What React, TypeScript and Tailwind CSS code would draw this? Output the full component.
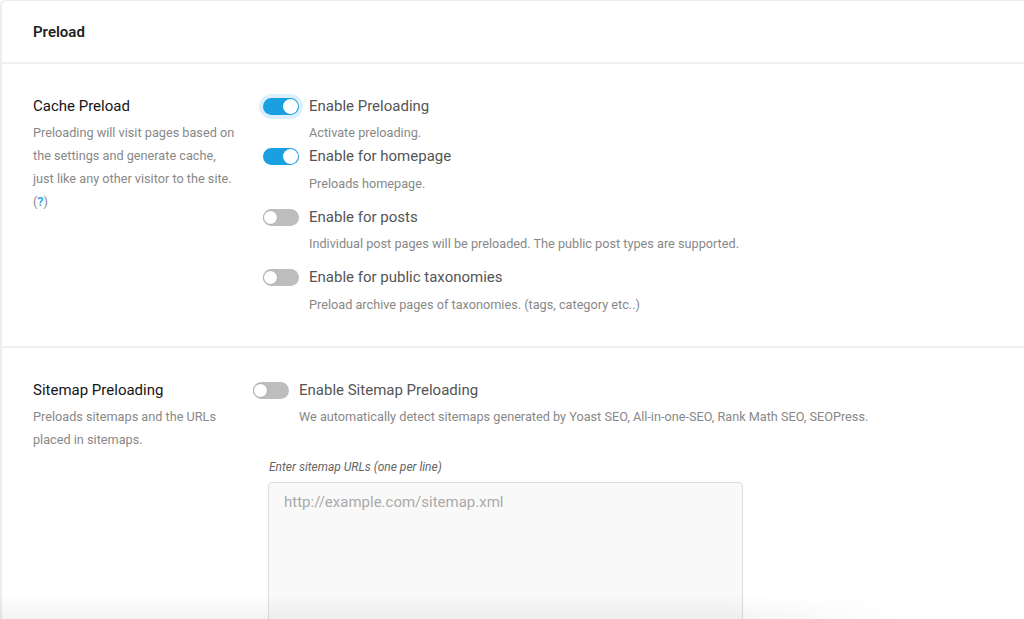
import React from "react";

function Toggle({ on, focus }: { on?: boolean; focus?: boolean }) {
  return (
    <span
      className={
        "relative inline-flex h-[17px] w-[36px] shrink-0 items-center rounded-full " +
        (on ? "bg-[#1a9fe0]" : "bg-[#bdbdbd]") +
        (focus ? " ring-4 ring-[#dcf0fb]" : "")
      }
    >
      <span
        className={
          "absolute top-[1px] h-[15px] w-[15px] rounded-full bg-white " +
          (on ? "right-[1px]" : "left-0 border border-[#aaaaaa]")
        }
      />
    </span>
  );
}

function Item({
  on,
  focus,
  label,
  desc,
  descMt,
  mt,
}: {
  on?: boolean;
  focus?: boolean;
  label: string;
  desc: string;
  descMt: string;
  mt: string;
}) {
  return (
    <div className={mt}>
      <div className="flex h-[20px] items-center">
        <Toggle on={on} focus={focus} />
        <span className="ml-[10px] text-[15px] leading-[20px] text-[#555555]">{label}</span>
      </div>
      <div className={"ml-[46px] text-[12.7px] leading-[20px] text-[#888888] " + descMt}>{desc}</div>
    </div>
  );
}

export default function App() {
  return (
    <div
      className="relative h-[619px] w-[1024px] overflow-hidden bg-white"
      style={{ fontFamily: "Roboto, 'Liberation Sans', sans-serif" }}
    >
      <div className="h-full rounded-tl-[6px] border-l-2 border-t border-[#ededed] bg-white">
        <div className="flex h-[61px] items-center px-[31px] pt-[1px]">
          <h2 className="text-[15px] font-semibold text-[#222222]">Preload</h2>
        </div>
        <div className="h-[2px] bg-[#efefef]" />

        <div className="flex px-[31px] pb-[31px] pt-[32px]">
          <div className="w-[230px] shrink-0">
            <div className="text-[15px] font-normal leading-[20px] text-[#151515]">Cache Preload</div>
            <p className="mt-[5px] w-[206px] text-[12.7px] leading-[23px] text-[#888888]">
              Preloading will visit pages based on the settings and generate cache, just like any other visitor to
              the site.{" "}
              <span>
                (<span className="font-medium text-[#1a9fe0]">?</span>)
              </span>
            </p>
          </div>
          <div>
            <Item on focus label="Enable Preloading" desc="Activate preloading." descMt="mt-[7px]" mt="" />
            <Item on label="Enable for homepage" desc="Preloads homepage." descMt="mt-[8px]" mt="mt-[3px]" />
            <Item
              label="Enable for posts"
              desc="Individual post pages will be preloaded. The public post types are supported."
              descMt="mt-[7px]"
              mt="mt-[13px]"
            />
            <Item
              label="Enable for public taxonomies"
              desc="Preload archive pages of taxonomies. (tags, category etc..)"
              descMt="mt-[8px]"
              mt="mt-[13px]"
            />
          </div>
        </div>
        <div className="h-[2px] bg-[#efefef]" />

        <div className="flex px-[31px] pt-[32px]">
          <div className="w-[220px] shrink-0">
            <div className="text-[15px] font-normal leading-[20px] text-[#151515]">Sitemap Preloading</div>
            <p className="mt-[5px] w-[200px] text-[12.7px] leading-[23px] text-[#888888]">
              Preloads sitemaps and the URLs placed in sitemaps.
            </p>
          </div>
          <div>
            <Item
              label="Enable Sitemap Preloading"
              desc="We automatically detect sitemaps generated by Yoast SEO, All-in-one-SEO, Rank Math SEO, SEOPress."
              descMt="mt-[7px]"
              mt=""
            />
            <div className="ml-[16px] mt-[30px] text-[12px] italic leading-[20px] text-[#666666]">
              Enter sitemap URLs (one per line)
            </div>
            <textarea
              className="ml-[15px] mt-[5px] block h-[160px] w-[475px] resize-none rounded-[4px] border border-[#dddddd] bg-[#f9f9f9] px-[15px] py-[9px] text-[15px] leading-[20px] text-[#444] outline-none placeholder:text-[#aaaaaa]"
              placeholder="http://example.com/sitemap.xml"
            />
          </div>
        </div>
      </div>
      <div className="pointer-events-none absolute bottom-0 left-0 h-[24px] w-[900px] bg-gradient-to-b from-transparent to-black/[0.05] [mask-image:linear-gradient(to_right,black_80%,transparent)]" />
    </div>
  );
}
